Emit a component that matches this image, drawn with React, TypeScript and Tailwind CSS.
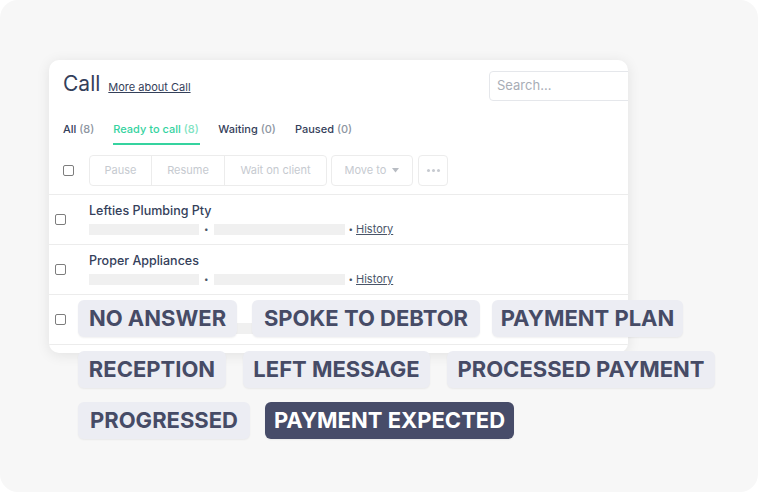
import React from "react";

const Checkbox = ({ className = "" }: { className?: string }) => (
  <div className={`w-[11px] h-[11px] rounded-[2px] border border-[#7d7d7d] bg-white ${className}`} />
);

const Tag = ({ children, dark = false, className = "" }: { children: React.ReactNode; dark?: boolean; className?: string }) => (
  <div
    className={`h-[37px] flex items-center justify-center rounded-[6px] text-[22px] font-bold whitespace-nowrap shadow-[0_1px_2px_rgba(0,0,0,0.06)] ${
      dark ? "bg-[#474c69] text-white" : "bg-[#ecedf3] text-[#464b66]"
    } ${className}`}
  >
    {children}
  </div>
);

const Row = ({ name }: { name: string }) => (
  <div className="h-[50px] border-b border-[#ececec] flex items-center">
    <Checkbox className="ml-[6px]" />
    <div className="ml-[23px] flex flex-col">
      <div className="text-[12.5px] font-medium text-[#34405a] leading-[16px]">{name}</div>
      <div className="flex items-center mt-[3px] text-[11px] text-[#4a5568] leading-[14px]">
        <div className="w-[110px] h-[11px] bg-[#f0f0f0]" />
        <span className="mx-[5px] text-[8px]">•</span>
        <div className="w-[131px] h-[11px] bg-[#f0f0f0]" />
        <span className="ml-[4px] mr-[3px] text-[8px]">•</span>
        <span className="underline">History</span>
      </div>
    </div>
  </div>
);

export default function App() {
  return (
    <div className="w-[758px] h-[492px] bg-white" style={{ fontFamily: "Inter, 'Noto Sans', sans-serif" }}>
      <div className="w-[758px] h-[492px] bg-[#f7f7f7] rounded-[18px] relative overflow-hidden">
        <div className="absolute left-[49px] top-[60px] w-[579px] h-[293px] bg-white rounded-[10px] overflow-hidden shadow-[0_2px_14px_rgba(0,0,0,0.09)]">
          {/* header */}
          <div className="flex items-start pt-[11px] pl-[14px] h-[41px]">
            <div className="flex items-baseline -mt-[1px]">
              <span className="text-[21px] text-[#34405a] leading-[28px]">Call</span>
              <span className="ml-[8px] text-[11px] text-[#34405a] underline">More about Call</span>
            </div>
            <div className="ml-auto w-[160px] h-[30px] border border-[#e5e7eb] rounded-[4px] flex items-center pl-[7px] text-[13px] text-[#a8adb6] -mr-[21px]">
              Search...
            </div>
          </div>
          {/* tabs */}
          <div className="flex items-start pl-[14px] mt-[21px] text-[11px] font-medium leading-[14px]">
            <div className="text-[#34405a]">
              All <span className="text-[#8d95a1]">(8)</span>
            </div>
            <div className="ml-[19px] flex flex-col items-start text-[#35d39f]">
              <span>
                Ready to call <span className="text-[#7fe3c2]">(8)</span>
              </span>
              <div className="mt-[7px] h-[2px] w-[87px] bg-[#35d39f]" />
            </div>
            <div className="ml-[18px] text-[#34405a]">
              Waiting <span className="text-[#8d95a1]">(0)</span>
            </div>
            <div className="ml-[19px] text-[#34405a]">
              Paused <span className="text-[#8d95a1]">(0)</span>
            </div>
          </div>
          {/* toolbar */}
          <div className="flex items-center pl-[14px] mt-[10px] h-[31px] text-[11px] text-[#c6cad0]">
            <Checkbox />
            <div className="ml-[15px] flex h-[31px] border border-[#ececec] rounded-[4px]">
              <div className="w-[62px] flex items-center justify-center border-r border-[#ececec]">Pause</div>
              <div className="w-[73px] flex items-center justify-center border-r border-[#ececec]">Resume</div>
              <div className="w-[101px] flex items-center justify-center">Wait on client</div>
            </div>
            <div className="ml-[4px] w-[82px] h-[31px] border border-[#ececec] rounded-[4px] flex items-center justify-center gap-[6px]">
              Move to
              <svg width="7" height="5" viewBox="0 0 7 5"><path d="M0 0h7L3.5 4.5z" fill="#b8bcc3" /></svg>
            </div>
            <div className="ml-[5px] w-[30px] h-[31px] border border-[#ececec] rounded-[4px] flex items-center justify-center gap-[2px]">
              <span className="w-[3px] h-[3px] rounded-full bg-[#c6cad0]" />
              <span className="w-[3px] h-[3px] rounded-full bg-[#c6cad0]" />
              <span className="w-[3px] h-[3px] rounded-full bg-[#c6cad0]" />
            </div>
          </div>
          <div className="mt-[8px] border-b border-[#ececec]" />
          <Row name="Lefties Plumbing Pty" />
          <Row name="Proper Appliances" />
          <div className="h-[50px] border-b border-[#ececec] flex items-center">
            <Checkbox className="ml-[6px]" />
            <div className="ml-[140px] mt-[18px] w-[150px] h-[11px] bg-[#f0f0f0]" />
          </div>
        </div>

        {/* tags overlay */}
        <div className="absolute left-[78px] top-[300px] flex flex-col gap-[14px]">
          <div className="flex">
            <Tag className="w-[159px]">NO ANSWER</Tag>
            <Tag className="ml-[15px] w-[228px]">SPOKE TO DEBTOR</Tag>
            <Tag className="ml-[12px] w-[191px]">PAYMENT PLAN</Tag>
          </div>
          <div className="flex">
            <Tag className="w-[148px]">RECEPTION</Tag>
            <Tag className="ml-[17px] w-[187px]">LEFT MESSAGE</Tag>
            <Tag className="ml-[17px] w-[268px]">PROCESSED PAYMENT</Tag>
          </div>
          <div className="flex">
            <Tag className="w-[172px]">PROGRESSED</Tag>
            <Tag dark className="ml-[15px] w-[249px]">PAYMENT EXPECTED</Tag>
          </div>
        </div>
      </div>
    </div>
  );
}
